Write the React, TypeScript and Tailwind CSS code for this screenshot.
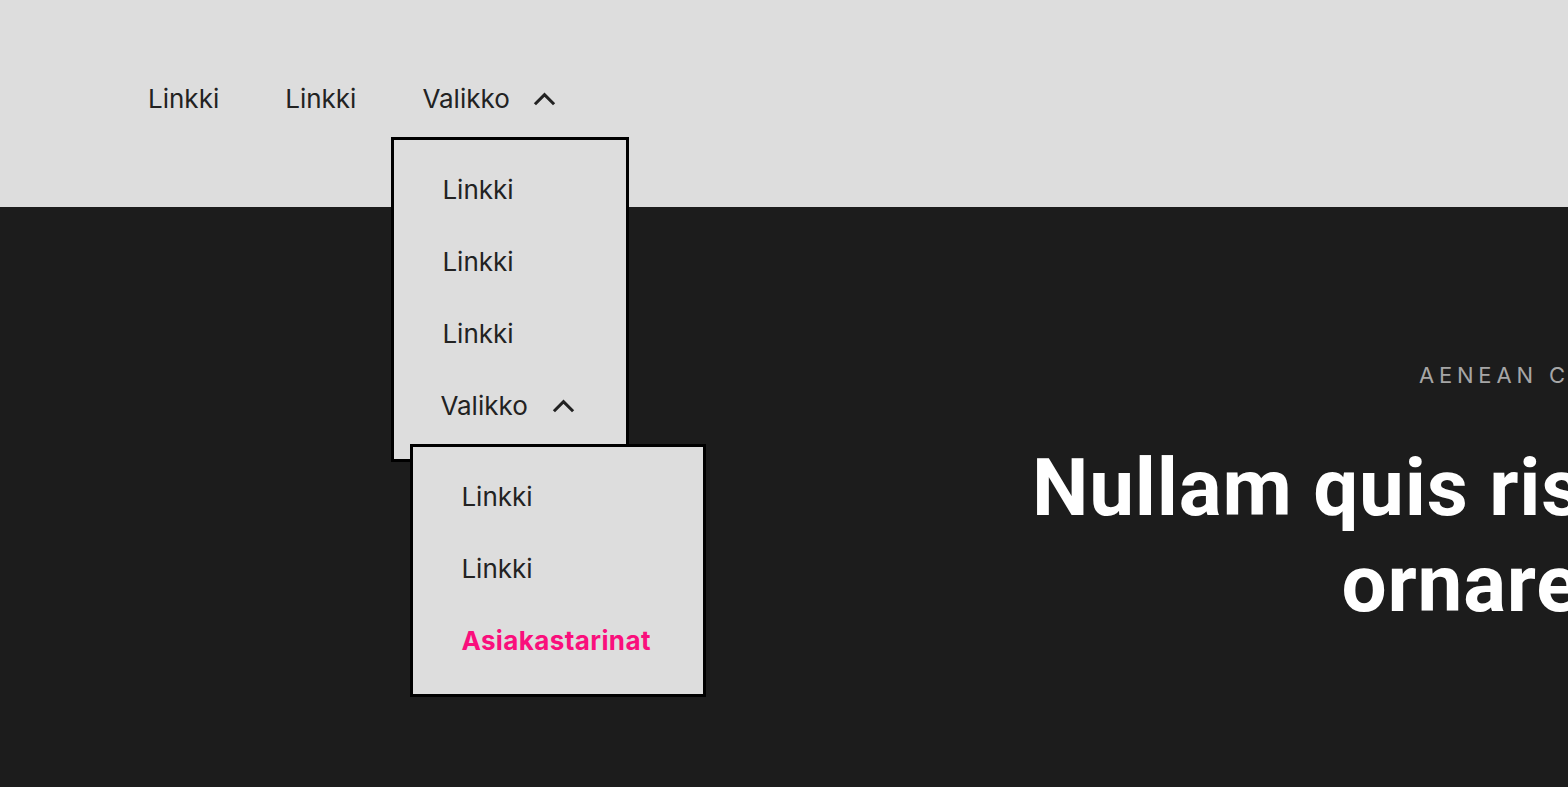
import React from 'react';

const font = { fontFamily: 'Inter, "Noto Sans", sans-serif' };
const heroFont = { fontFamily: 'Roboto, "Noto Sans", sans-serif' };

const Chevron: React.FC<{ className?: string }> = ({ className }) => (
  <svg viewBox="0 0 24 14" fill="none" stroke="currentColor" strokeWidth={3.2} className={className}>
    <path d="M2 12.5 12 2.5l10 10" />
  </svg>
);

const MenuLink: React.FC<{ label: string; accent?: boolean }> = ({ label, accent }) => (
  <a
    href="#"
    className={
      accent
        ? 'flex h-[72px] items-center text-[26px] font-bold tracking-[0.015em] text-[#fa0f7c]'
        : 'flex h-[72px] items-center text-[26px] text-[#222222]'
    }
  >
    {label}
  </a>
);

const App: React.FC = () => {
  return (
    <div className="flex h-screen w-full flex-col overflow-hidden bg-[#1c1c1c]" style={font}>
      <header className="relative z-10 h-[207px] shrink-0 bg-[#dddddd]">
        <nav className="flex items-center gap-[66px] pl-[148px] pt-[80px] text-[26px] leading-[38px] text-[#222222]">
          <a href="#">Linkki</a>
          <a href="#">Linkki</a>
          <div className="relative">
            <button className="flex items-center gap-[23px]">
              <span>Valikko</span>
              <Chevron className="h-[14px] w-[23px]" />
            </button>

            <div className="absolute left-[-31px] top-[57px] w-[238px] border-[3px] border-black bg-[#dddddd] pl-[48px] pt-[14px] pb-[17px]">
              <MenuLink label="Linkki" />
              <MenuLink label="Linkki" />
              <MenuLink label="Linkki" />
              <div className="-ml-[2px] flex h-[72px] items-center gap-[24px]">
                <span>Valikko</span>
                <Chevron className="h-[14px] w-[23px]" />
              </div>

              <div className="absolute left-[16px] top-[304px] w-[296px] border-[3px] border-black bg-[#dddddd] pl-[48px] pt-[14px] pb-[17px]">
                <MenuLink label="Linkki" />
                <MenuLink label="Linkki" />
                <MenuLink label="Asiakastarinat" accent />
              </div>
            </div>
          </div>
        </nav>
      </header>

      <section className="flex flex-1">
        <div className="ml-[858px] w-[1600px] shrink-0 pt-[152px] text-center">
          <p className="whitespace-nowrap pr-[40px] text-[22px] uppercase tracking-[0.22em] text-[#a6a6a6]">
            Aenean condimentum nibh
          </p>
          <h1 className="mt-[48px] text-[80px] font-bold leading-[96px] tracking-[0.01em] text-white" style={heroFont}>
            <span className="block whitespace-nowrap">Nullam quis risus eget urna mollis</span>
            <span className="block whitespace-nowrap">ornare vel eu leo.</span>
          </h1>
        </div>
      </section>
    </div>
  );
};

export default App;
